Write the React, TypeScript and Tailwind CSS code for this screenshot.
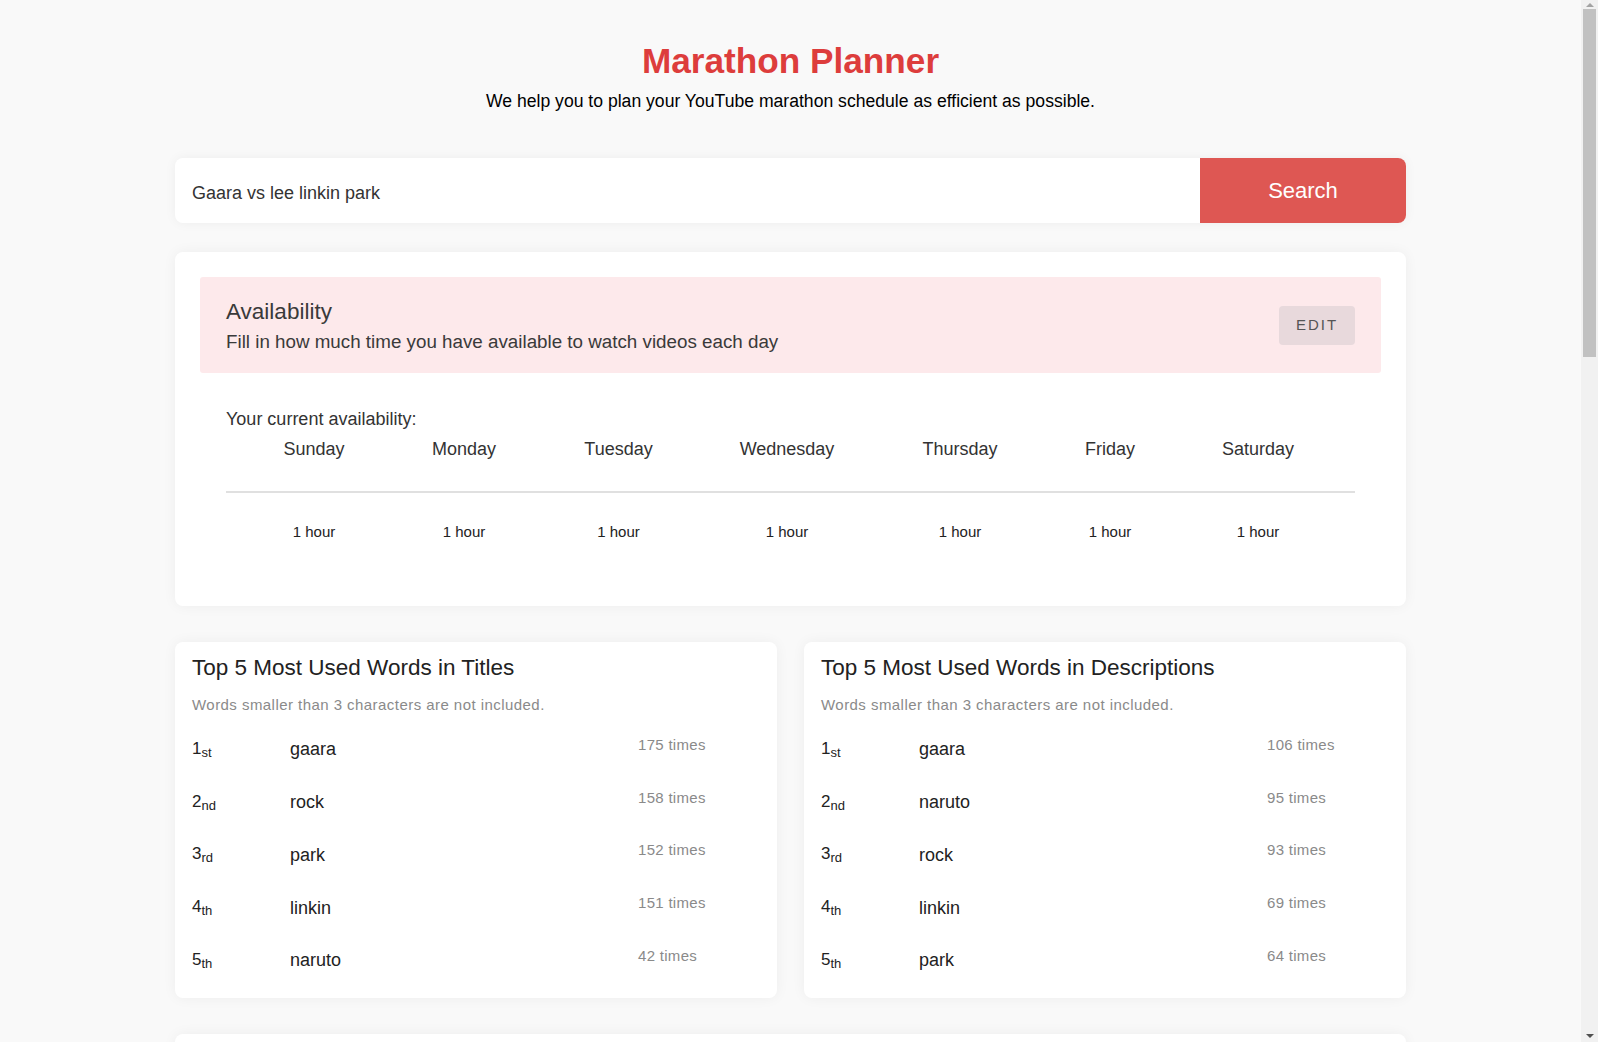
import React from "react";

const days = ["Sunday", "Monday", "Tuesday", "Wednesday", "Thursday", "Friday", "Saturday"];

type Row = { rank: string; suf: string; word: string; count: string };

const titles: Row[] = [
  { rank: "1", suf: "st", word: "gaara", count: "175 times" },
  { rank: "2", suf: "nd", word: "rock", count: "158 times" },
  { rank: "3", suf: "rd", word: "park", count: "152 times" },
  { rank: "4", suf: "th", word: "linkin", count: "151 times" },
  { rank: "5", suf: "th", word: "naruto", count: "42 times" },
];

const descs: Row[] = [
  { rank: "1", suf: "st", word: "gaara", count: "106 times" },
  { rank: "2", suf: "nd", word: "naruto", count: "95 times" },
  { rank: "3", suf: "rd", word: "rock", count: "93 times" },
  { rank: "4", suf: "th", word: "linkin", count: "69 times" },
  { rank: "5", suf: "th", word: "park", count: "64 times" },
];

function WordCard({ title, rows }: { title: string; rows: Row[] }) {
  return (
    <div className="bg-white rounded-[8px] shadow-[0_0_14px_rgba(0,0,0,0.05)] h-[356px] px-[17px] pt-[12px]">
      <h2 className="text-[22.5px] leading-[28px] text-[#222]">{title}</h2>
      <p className="mt-[13px] text-[15px] leading-[20px] tracking-[0.45px] text-[#8a8a8a]">
        Words smaller than 3 characters are not included.
      </p>
      <div className="mt-[8px]">
        {rows.map((r) => (
          <div key={r.rank} className="flex items-center h-[52.75px]">
            <div className="w-[98px] text-[17px] text-[#222] leading-[24px] pt-[3px]">
              {r.rank}
              <span className="text-[13px] align-[-3px]">{r.suf}</span>
            </div>
            <div className="w-[348px] text-[18px] leading-[24px] text-[#222]">{r.word}</div>
            <div className="text-[15px] leading-[20px] tracking-[0.3px] text-[#8a8a8a] mb-[9px]">{r.count}</div>
          </div>
        ))}
      </div>
    </div>
  );
}

function FakeScrollbar() {
  return (
    <div className="fixed top-0 right-0 w-[17px] h-screen bg-[#f1f1f1] flex flex-col items-center">
      <div className="h-[9px] flex items-center justify-center">
        <div className="w-0 h-0 border-l-[4px] border-r-[4px] border-b-[4px] border-l-transparent border-r-transparent border-b-[#a3a3a3]" />
      </div>
      <div className="w-[13px] h-[348px] bg-[#c1c1c1]" />
      <div className="flex-1" />
      <div className="h-[12px] flex items-center justify-center">
        <div className="w-0 h-0 border-l-[4px] border-r-[4px] border-t-[4px] border-l-transparent border-r-transparent border-t-[#505050]" />
      </div>
    </div>
  );
}

export default function App() {
  return (
    <div className="min-h-screen bg-[#f9f9f9] font-['Liberation_Sans',Arial,sans-serif]">
      <div className="mr-[17px] pb-[60px]">
        <div className="mx-auto w-[1231px] pt-[41px]">
          <h1 className="text-center text-[35.2px] leading-[40px] font-bold text-[#dd3d3c]">Marathon Planner</h1>
          <p className="mt-[10px] text-center text-[17.6px] leading-[20px] text-black">
            We help you to plan your YouTube marathon schedule as efficient as possible.
          </p>

          <div className="mt-[47px] flex h-[65px] bg-white rounded-[8px] shadow-[0_0_12px_rgba(0,0,0,0.05)]">
            <div className="flex-1 flex items-center pl-[17px] pt-[5px] text-[18px] text-[#333]">Gaara vs lee linkin park</div>
            <button className="w-[206px] bg-[#de5753] text-white text-[22px] rounded-r-[8px]">Search</button>
          </div>

          <div className="mt-[29px] bg-white rounded-[8px] shadow-[0_0_14px_rgba(0,0,0,0.05)] h-[354px] p-[25px]">
            <div className="bg-[#fde9eb] rounded-[3px] h-[96px] px-[26px] flex justify-between">
              <div className="pt-[22px]">
                <div className="text-[22.5px] leading-[26px] text-[#3a3a3a]">Availability</div>
                <div className="mt-[5px] text-[18.8px] leading-[24px] text-[#3a3a3a]">
                  Fill in how much time you have available to watch videos each day
                </div>
              </div>
              <button className="self-center w-[76px] h-[39px] rounded-[4px] bg-[#e8d9dc] text-[15px] tracking-[2px] text-[#555]">
                EDIT
              </button>
            </div>

            <div className="px-[26px]">
              <div className="mt-[35px] text-[18px] leading-[22px] text-[#333]">Your current availability:</div>
              <div className="grid grid-cols-[176px_124px_185px_152px_194px_106px_190px] border-b-2 border-[#e0e0e0]">
                {days.map((d) => (
                  <div key={d} className="text-center text-[18px] leading-[24px] text-[#333] pt-[7px] pb-[30px]">
                    {d}
                  </div>
                ))}
              </div>
              <div className="grid grid-cols-[176px_124px_185px_152px_194px_106px_190px]">
                {days.map((d) => (
                  <div key={d} className="text-center text-[15px] leading-[20px] text-[#222] pt-[29px]">
                    1 hour
                  </div>
                ))}
              </div>
            </div>
          </div>

          <div className="mt-[36px] grid grid-cols-2 gap-[27px]">
            <WordCard title="Top 5 Most Used Words in Titles" rows={titles} />
            <WordCard title="Top 5 Most Used Words in Descriptions" rows={descs} />
          </div>

          <div className="mt-[36px] bg-white rounded-[8px] shadow-[0_0_14px_rgba(0,0,0,0.05)] h-[420px]"></div>
        </div>
      </div>
      <FakeScrollbar />
    </div>
  );
}
